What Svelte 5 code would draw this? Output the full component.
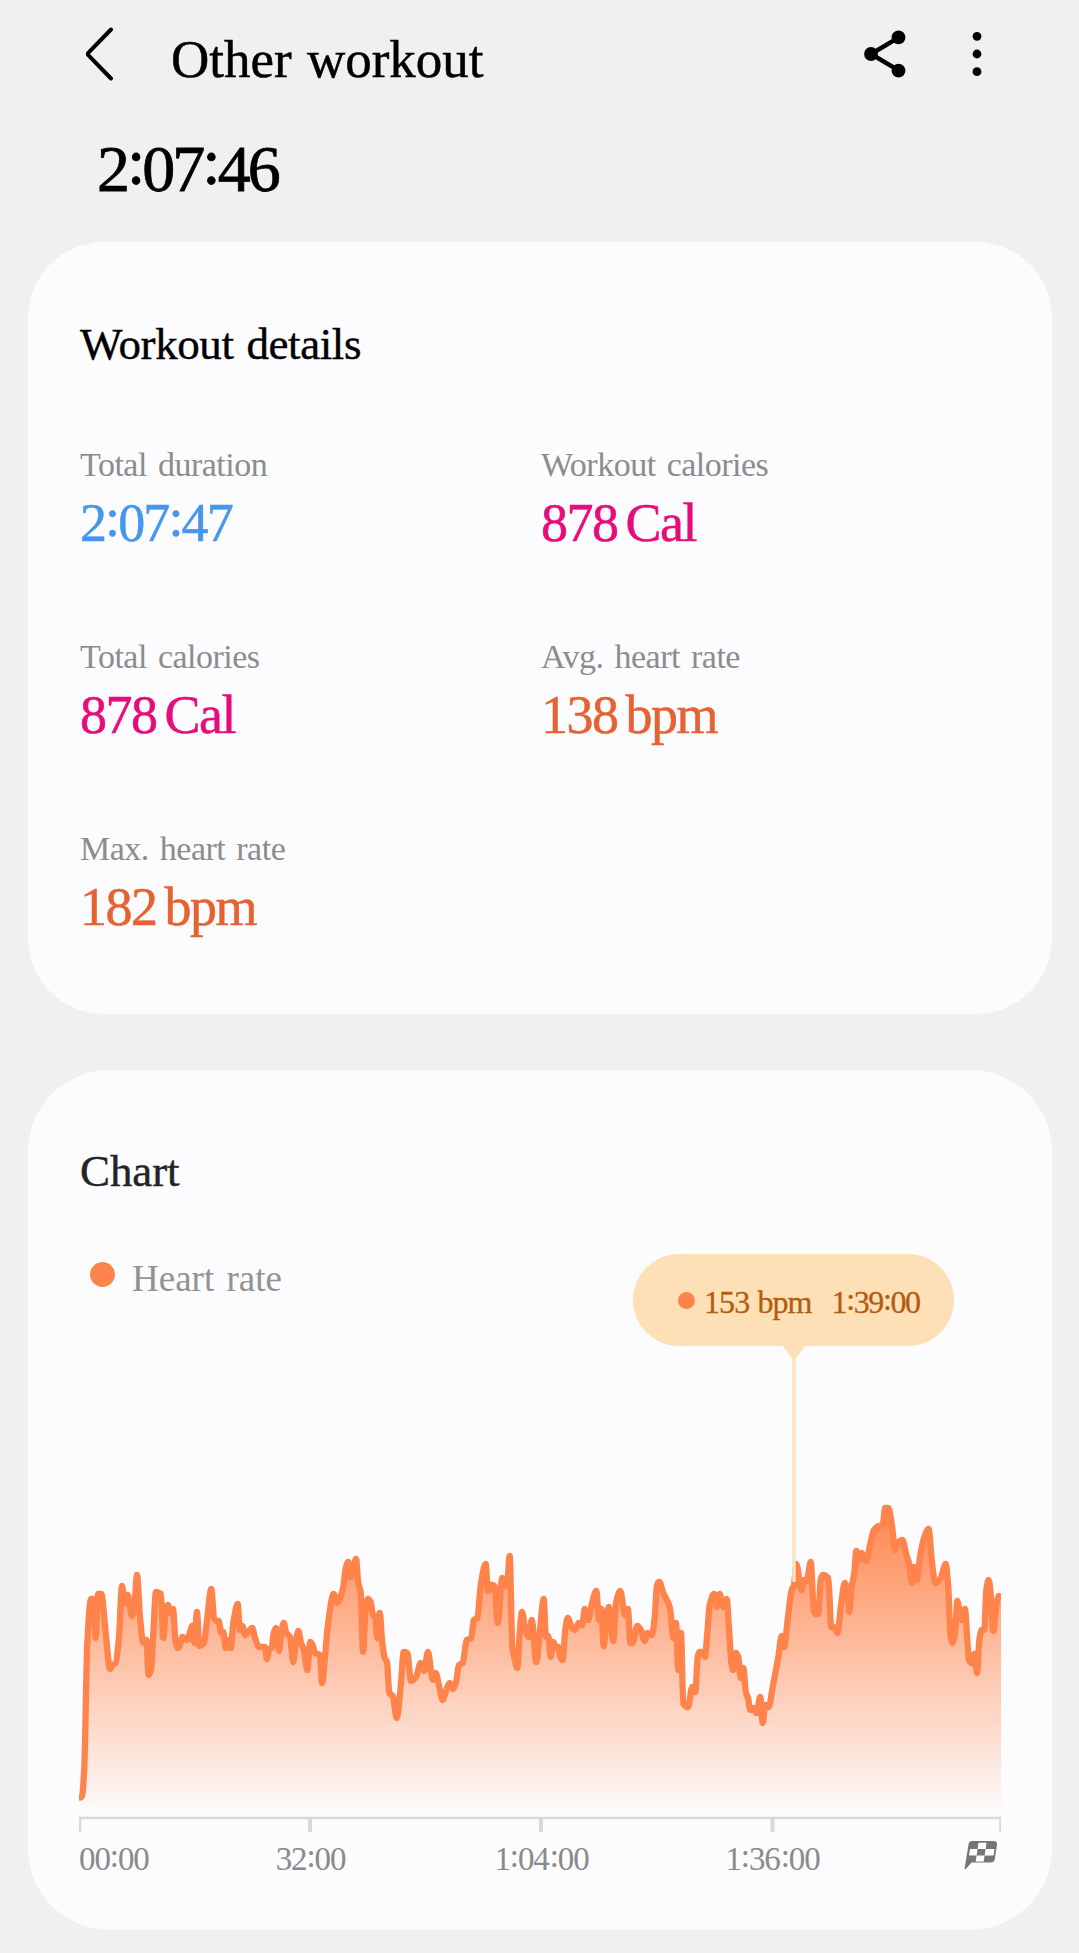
<script>
	const stats = [
		{ label: 'Total duration', value: '2:07:47', color: 'blue' },
		{ label: 'Workout calories', value: '878', unit: 'Cal', color: 'pink' },
		{ label: 'Total calories', value: '878', unit: 'Cal', color: 'pink' },
		{ label: 'Avg. heart rate', value: '138', unit: 'bpm', color: 'orange' },
		{ label: 'Max. heart rate', value: '182', unit: 'bpm', color: 'orange' }
	];

	const times = ['00:00', '32:00', '1:04:00', '1:36:00'];
	const ticks = [1, 231, 462, 693.5, 921.5];

	// heart rate samples as x,y in plot units
	const samples = `0,297.5 3,296.5 5.3,267 8.3,143 12,99 14.3,99 16.7,138 19,94 22.3,94 26.7,133 31,169 33.3,165
		36.7,163 40,137 43,86 46,103 48.7,95 53,116 55.3,107 58,75 61,117 64.3,143 67.3,140 69.7,175 72,170
		74.3,133 77,92 82,94 84.3,138 86.7,110 89,105 91.3,113 94,109 96.7,143 98.7,148 101,145 103.3,137
		108.3,140 111,132 113,126 115.3,143 118,112 120.3,146 125,143 127.7,123 132.3,89 135,118 137.3,121
		139.7,121 142,133 144.3,132 146.7,148 149,140 151.7,148 154.3,123 158.7,104 161,130 163.3,126 166,135
		173.3,128 176,138 180,147 185.7,147 188,159 190.3,149 192.7,148 194.7,133 197,128 200,151 202.3,133
		204.7,123 207.3,133 211,137 214.3,162 216.7,143 219.3,131 222,143 225,150 228.3,170 231.3,142 234,146
		236,153 241,155 243,183 246,157 248.7,127 254.7,94 258,103 263.7,90 267,67 269.3,62 272,77 277,59
		279.3,83 281.7,92 284,152 286.7,107 289,99 291.7,102 293.7,114 296.3,118 298.3,138 300.7,113 303.3,143
		305.7,158 308,162 310.3,193 313.7,196 317.7,218 321.7,187 324.7,152 328.3,153 332,181 337,177 341.7,163
		345,171 349,152 353.7,180 356.7,173 360.3,187 363.7,200 367.3,190 370.7,183 373.7,189 377,182 380,165
		383.7,163 387.7,140 392.3,138 394.7,120 398.3,118 402,83 406.7,64 409,91 412,85 415.7,86 418.7,123
		423.3,78 426,86 428.3,82 430.7,56 433.3,147 435.3,157 438.3,168 440.7,133 443,112 446.3,130 450,137
		452.7,120 457.3,162 461,130 464.7,99 467,137 469.3,136 471.7,157 474.3,142 476.7,147 479,147 481.3,157
		483.7,160 486.3,130 488.7,118 492.7,127 496,130 499.7,123 503.3,125 505.7,109 509,120 513.3,102
		517.3,91 520,120 522.3,109 524.7,146 527,123 529.7,107 534.3,141 537,103 541.3,91 546,115 549,109
		551.3,143 553.7,143 558.3,126 562,130 565.7,141 568.7,133 573,135 575.7,117 578,85 580.3,82 584.3,93
		591,108 594.3,138 597,123 599.3,170 602,133 604.3,204 609,207 613.3,187 616.3,192 618.7,157 620.3,152
		623.3,152 626,157 628.3,133 630.7,105 635,94 637.7,107 640.7,94 644.3,107 647.7,99 650.3,133
		652.3,162 654.3,170 657,153 659.3,157 661.7,178 664.3,168 667,193 669,198 671.3,210 674.3,208
		677.3,213 681.3,197 683.7,223 686.3,205 689.7,207 693.7,187 699.3,157 702.7,136 705.3,147 708.3,123
		712.7,90 715,85 717.3,64 722.3,90 725,80 727.7,81 731.7,62 735,112 737,114 739.3,114 741.7,80
		743.7,75 749.3,78 752.3,127 755,127 758.3,133 762.3,103 765.7,83 768.3,90 770.3,112 772.7,87
		775.3,73 777.3,51 780,60 782.7,53 787.3,61 791,45 795,30 800,26 803.7,26 806,8 809.3,8 813.3,28
		816,50 818.7,43 823.3,40 827.7,56 830,63 833,83 835.3,67 838,80 841,57 845,38 849.7,29 852.7,60
		856.3,83 861.7,78 866.7,64 869.3,87 871.3,133 873.7,143 876.3,130 878.3,101 882.3,120 886,109
		888.3,140 890,160 892.7,163 895.3,154 898,173 900.3,140 902.7,130 905.3,130 907.3,90 909.7,80
		912,97 914.3,131 917.7,103 920,96 922,97`
		.trim()
		.split(/\s+/)
		.map((pair) => pair.split(',').map(Number));

	// monotone cubic, so the curve never overshoots a sample
	function curve(pts) {
		const slope = (i) => (pts[i + 1][1] - pts[i][1]) / (pts[i + 1][0] - pts[i][0]);
		const tangents = pts.map((_, i) => {
			if (i === 0 || i === pts.length - 1) return 0;
			const a = slope(i - 1);
			const b = slope(i);
			return a * b <= 0 ? 0 : (2 * a * b) / (a + b);
		});
		let d = `M${pts[0]}`;
		for (let i = 1; i < pts.length; i++) {
			const [x0, y0] = pts[i - 1];
			const [x1, y1] = pts[i];
			const h = (x1 - x0) / 3;
			d += `C${x0 + h},${y0 + tangents[i - 1] * h} ${x1 - h},${y1 - tangents[i] * h} ${x1},${y1}`;
		}
		return d;
	}

	const line = curve(samples);
	const area = `${line}V317H0Z`;
</script>

{#snippet clock(time)}
	{#each time.split(/(:)/) as part}{#if part === ':'}<span class="colon">:</span>{:else}{part}{/if}{/each}
{/snippet}

<main>
	<header>
		<svg class="back" width="32" height="60" viewBox="0 0 32 60">
			<path d="M27 5.500 4.500 28.600q-1.400 1.400 0 2.800L27 54.500" />
		</svg>
		<h1>Other workout</h1>
		<svg class="share" width="44" height="50" viewBox="0 0 44 50">
			<path d="M36 8.400 8 25l28 16.600" />
			<circle cx="35.500" cy="8.400" r="6.900" />
			<circle cx="8" cy="25" r="6.900" />
			<circle cx="35.500" cy="41.600" r="6.900" />
		</svg>
		<svg class="more" width="12" height="50" viewBox="0 0 12 50">
			<circle cx="6" cy="7.300" r="4.400" />
			<circle cx="6" cy="25" r="4.400" />
			<circle cx="6" cy="42.700" r="4.400" />
		</svg>
	</header>

	<p class="elapsed">{@render clock('2:07:46')}</p>

	<section class="card">
		<h2>Workout details</h2>
		<div class="stats">
			{#each stats as stat}
				<div>
					<p class="label">{stat.label}</p>
					<p class="value {stat.color}">
						{@render clock(stat.value)}{#if stat.unit}<span class="unit">{stat.unit}</span>{/if}
					</p>
				</div>
			{/each}
		</div>
	</section>

	<section class="card chart">
		<h2>Chart</h2>
		<div class="legend"><i></i><span>Heart rate</span></div>

		<svg class="plot" width="922" height="332" viewBox="0 0 922 332">
			<defs>
				<linearGradient id="fade" gradientUnits="userSpaceOnUse" x1="0" y1="0" x2="0" y2="315">
					<stop offset="0" stop-color="#ff844c" />
					<stop offset="1" stop-color="#ff844c" stop-opacity="0" />
				</linearGradient>
			</defs>
			<path d={area} fill="url(#fade)" />
			<path class="line" d={line} />
			<path class="axis" d="M0 318H922" />
			{#each ticks as x, i}
				<path class="axis" class:inner={i > 0 && i < 4} d="M{x} 318V332" />
			{/each}
		</svg>

		<div class="times">
			{#each times as time}
				<span>{@render clock(time)}</span>
			{/each}
			<svg class="flag" width="36" height="32" viewBox="0 0 36 32">
				<path d="M9 1H30.500Q34.500 1 34 4.500L31.800 19Q31.200 22.500 27.500 22.500H8.500L2.500 29.300H1.500L5.500 4.500Q6 1 9 1Z" fill="#757577" />
				<path d="M15.500 2.800h8l-.9 6.200h-8zM7 9h7.600l-1 6.600H6zM22.600 9h8.900l-1 6.600h-8.900zM13.600 15.600h8l-.9 6h-8z" fill="#fff" />
			</svg>
		</div>

		<div class="marker">
			<div class="bubble">
				<i></i>
				<span class="rate">153 bpm</span>
				<span class="at">{@render clock('1:39:00')}</span>
			</div>
			<svg class="pin" width="24" height="328" viewBox="0 0 24 328">
				<path d="M12 10V237" stroke="#fbe4c2" stroke-width="3.500" />
				<path d="M0 0H24L12 16Z" fill="#fee0b6" />
			</svg>
		</div>
	</section>
</main>

<style>
	:global(body) {
		background: #f0f0f2;
	}

	main {
		width: 1079px;
		height: 1953px;
		overflow: hidden;
		font-family: 'Liberation Serif', 'Times New Roman', serif;
		color: #000;
		background: #f0f0f2;
	}

	h1,
	h2,
	p {
		margin: 0;
		font-weight: 400;
		white-space: nowrap;
	}

	.colon {
		vertical-align: 0.1em;
		line-height: 0;
	}

	header {
		display: flex;
		align-items: center;
		height: 108px;
		padding: 0 96px 0 84px;
	}

	.back path {
		fill: none;
		stroke: #000;
		stroke-width: 4;
		stroke-linecap: round;
	}

	h1 {
		margin: 9px auto 0 55px;
		font-size: 53px;
		line-height: 60px;
		letter-spacing: 0;
		word-spacing: 2px;
		-webkit-text-stroke: 0.5px;
	}

	.share {
		margin-right: 64px;
	}

	.share path {
		fill: none;
		stroke: #000;
		stroke-width: 4.5;
	}

	.elapsed {
		padding-left: 97px;
		font-size: 66px;
		line-height: 122px;
		letter-spacing: -3px;
		-webkit-text-stroke: 0.8px;
	}

	.card {
		box-sizing: border-box;
		width: 1024px;
		height: 772px;
		margin: 12px 0 0 28px;
		padding: 72px 51px 0;
		border-radius: 76px;
		background: #fcfcfe;
	}

	h2 {
		padding-left: 1px;
		font-size: 45px;
		line-height: 60px;
		letter-spacing: -0.4px;
		word-spacing: 2px;
		-webkit-text-stroke: 0.4px;
	}

	.stats {
		display: grid;
		grid-template-columns: 461px 461px;
		row-gap: 76px;
		margin: 69px 0 0 1px;
	}

	.label {
		font-size: 34px;
		line-height: 44px;
		letter-spacing: -0.5px;
		word-spacing: 3px;
		color: #8c8c8f;
	}

	.value {
		font-size: 54px;
		line-height: 72px;
		letter-spacing: -1.5px;
		-webkit-text-stroke: 0.5px;
	}

	.unit {
		margin-left: 8px;
	}

	.blue {
		color: #4796ee;
		letter-spacing: -1.9px;
	}

	.pink {
		color: #e60d7b;
	}

	.orange {
		color: #e56232;
	}

	.chart {
		position: relative;
		height: 860px;
		margin-top: 56px;
		padding-top: 71px;
		border-radius: 82px;
	}

	.chart h2 {
		color: #222427;
		letter-spacing: -0.1px;
	}

	.legend {
		display: flex;
		align-items: center;
		gap: 17px;
		height: 50px;
		margin: 52px 0 0 11px;
		font-size: 37px;
		word-spacing: 3px;
		color: #929294;
	}

	.legend i {
		width: 25px;
		height: 25px;
		margin-bottom: 7px;
		border-radius: 50%;
		background: #ff844c;
	}

	.plot {
		display: block;
		margin-top: 197px;
	}

	.line {
		fill: none;
		stroke: #ff844c;
		stroke-width: 6.3;
		stroke-linejoin: round;
	}

	.axis {
		fill: none;
		stroke: #d9d9da;
		stroke-width: 2.5;
	}

	.inner {
		stroke-width: 4;
	}

	.times {
		display: grid;
		grid-template-columns: 115.5px 231px 231px 231px 113.5px;
		justify-items: center;
		margin-top: 7px;
		font-size: 33px;
		line-height: 40px;
		letter-spacing: -1.1px;
		color: #8a8a8d;
	}

	.times span {
		padding-left: 1px;
	}

	.times span:first-child {
		justify-self: start;
		padding: 0;
	}

	.flag {
		justify-self: end;
		margin: 1px 2px 0 0;
	}

	/* floats over the plot at the selected time */
	.marker {
		position: absolute;
		top: 184px;
		left: 605px;
		display: flex;
		flex-direction: column;
	}

	.bubble {
		box-sizing: border-box;
		display: flex;
		align-items: center;
		width: 321px;
		height: 92px;
		padding: 4px 0 0 45px;
		border-radius: 46px;
		font-size: 32px;
		white-space: nowrap;
		color: #b35c10;
		background: #fee0b6;
		-webkit-text-stroke: 0.3px;
	}

	.bubble i {
		width: 17px;
		height: 17px;
		margin: 0 9px 4px 0;
		border-radius: 50%;
		background: #ff844c;
	}

	.rate {
		margin-right: 20px;
		letter-spacing: -0.9px;
		word-spacing: 1px;
	}

	.at {
		letter-spacing: -1.4px;
	}

	.pin {
		margin: -1px 0 0 149px;
	}
</style>
